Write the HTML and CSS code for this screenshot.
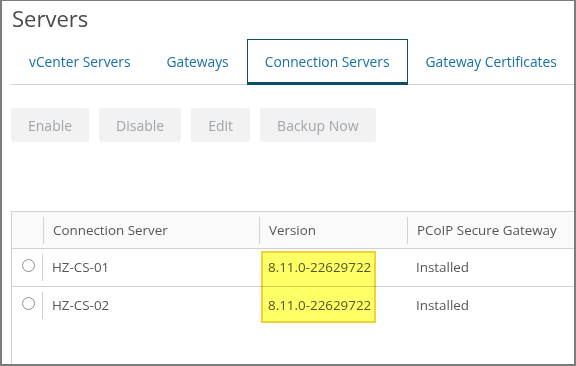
FILE: index.html
```html
<!DOCTYPE html>
<html lang="en">
<head>
	<meta charset="UTF-8">
	<title>Servers</title>
	<link rel="stylesheet" href="styles.css">
</head>
<body>
	<div class="frame">
		<h1 class="title">Servers</h1>

		<div class="tabs">
			<div class="tab">vCenter Servers</div>
			<div class="tab">Gateways</div>
			<div class="tab active">Connection Servers</div>
			<div class="tab">Gateway Certificates</div>
		</div>

		<div class="toolbar">
			<button class="btn">Enable</button>
			<button class="btn">Disable</button>
			<button class="btn">Edit</button>
			<button class="btn">Backup Now</button>
		</div>

		<div class="grid">
			<table>
				<colgroup>
					<col class="c-sel">
					<col class="c-name">
					<col class="c-ver">
					<col class="c-gw">
				</colgroup>
				<thead>
					<tr>
						<th><div class="cell first"></div></th>
						<th><div class="cell">Connection Server</div></th>
						<th><div class="cell">Version</div></th>
						<th><div class="cell">PCoIP Secure Gateway</div></th>
					</tr>
				</thead>
				<tbody>
					<tr>
						<td><div class="cell sel"><span class="radio"></span></div></td>
						<td><div class="cell">HZ-CS-01</div></td>
						<td><div class="cell">8.11.0-22629722</div></td>
						<td><div class="cell">Installed</div></td>
					</tr>
					<tr>
						<td><div class="cell sel"><span class="radio"></span></div></td>
						<td><div class="cell">HZ-CS-02</div></td>
						<td><div class="cell">8.11.0-22629722</div></td>
						<td><div class="cell">Installed</div></td>
					</tr>
				</tbody>
			</table>
			<div class="highlight"></div>
		</div>
	</div>
</body>
</html>
```

FILE: styles.css
```css
body {
	margin: 0;
	font-family: "Open Sans", "Liberation Sans", sans-serif;
	color: #565656;
}

.frame {
	box-sizing: border-box;
	width: 576px;
	height: 366px;
	overflow: hidden;
	border: 2px solid #7c7c7c;
	border-top-width: 1px;
	background: #fff;
}

.title {
	margin: 0 0 0 10px;
	padding-top: 2px;
	font-size: 22px;
	font-weight: 400;
	line-height: 30px;
	color: #4a4a4a;
}

/********** tabs **********/
.tabs {
	display: flex;
	align-items: flex-start;
	height: 45px;
	margin: 6px 0 0 9px;
	border-bottom: 1px solid #d0d0d0;
}
.tab {
	box-sizing: border-box;
	height: 46px;
	padding: 0 17px;
	line-height: 44px;
	font-size: 13.8px;
	color: #1670a6;
	white-space: nowrap;
	border: 1px solid transparent;
	border-bottom: 3px solid transparent;
}
.tab.active {
	border-color: #0f4e6b;
}

/********** buttons **********/
.toolbar {
	display: flex;
	gap: 10px;
	margin: 23px 0 0 9px;
}
.btn {
	height: 34px;
	padding: 0 17px;
	font-family: inherit;
	font-size: 14px;
	color: #a0a5ab;
	background: #f2f2f2;
	border: none;
	border-radius: 3px;
}

/********** table **********/
.grid {
	position: relative;
	height: 200px;
	margin: 69px 0 0 9px;
	border-top: 1px solid #d0d0d0;
	border-left: 1px solid #d0d0d0;
}
table {
	width: 700px;
	table-layout: fixed;
	border-collapse: collapse;
	font-size: 13.4px;
}
.c-sel { width: 31px; }
.c-name { width: 216px; }
.c-ver { width: 148px; }
.c-gw { width: 305px; }

th {
	padding: 5px 0 4px;
	background: #fafafa;
	border-bottom: 1px solid #d0d0d0;
	font-weight: 400;
	text-align: left;
	color: #565656;
}
th .cell {
	height: 27px;
	line-height: 27px;
	padding-left: 9px;
	border-left: 1px solid #d0d0d0;
}
th .cell.first {
	border-left: none;
}

td {
	padding: 5px 0;
	border-bottom: 1px solid #d0d0d0;
}
tbody tr:last-child td {
	border-bottom: none;
}
td .cell {
	height: 27px;
	line-height: 27px;
	padding-left: 9px;
}
td .cell.sel {
	display: flex;
	align-items: flex-start;
	padding-left: 10px;
	padding-top: 5px;
	height: 22px;
	border-right: 1px solid #d0d0d0;
}
.radio {
	box-sizing: border-box;
	width: 13px;
	height: 13px;
	border: 1px solid #8f8f8f;
	border-radius: 50%;
	background: #fff;
}

.highlight {
	position: absolute;
	left: 249px;
	top: 39px;
	width: 115px;
	height: 72px;
	box-sizing: border-box;
	background: #ffff66;
	border: 2px solid #f1d232;
	mix-blend-mode: multiply;
}
```
